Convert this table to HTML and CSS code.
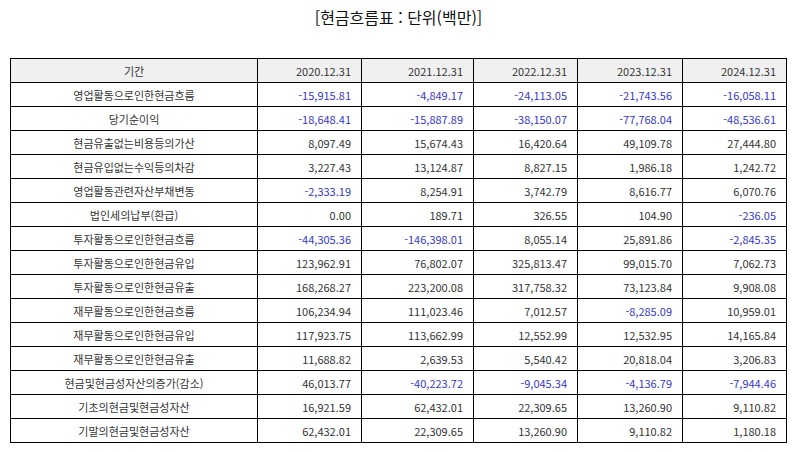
FILE: index.html
```html
<!DOCTYPE html>
<html lang="ko">
<head>
<meta charset="utf-8">
<title>현금흐름표</title>
<link rel="stylesheet" href="styles.css">
</head>
<body>
<div class="page">
  <h1 class="title">[현금흐름표 : 단위(백만)]</h1>
  <table class="cf">
    <colgroup>
      <col class="c-label">
      <col class="c-a">
      <col class="c-b">
      <col class="c-a">
      <col class="c-c">
      <col class="c-a">
    </colgroup>
    <thead>
      <tr><th class="lbl">기간</th><th>2020.12.31</th><th>2021.12.31</th><th>2022.12.31</th><th>2023.12.31</th><th>2024.12.31</th></tr>
    </thead>
    <tbody>
      <tr><td class="lbl">영업활동으로인한현금흐름</td><td class="neg">-15,915.81</td><td class="neg">-4,849.17</td><td class="neg">-24,113.05</td><td class="neg">-21,743.56</td><td class="neg">-16,058.11</td></tr>
      <tr><td class="lbl">당기순이익</td><td class="neg">-18,648.41</td><td class="neg">-15,887.89</td><td class="neg">-38,150.07</td><td class="neg">-77,768.04</td><td class="neg">-48,536.61</td></tr>
      <tr><td class="lbl">현금유출없는비용등의가산</td><td>8,097.49</td><td>15,674.43</td><td>16,420.64</td><td>49,109.78</td><td>27,444.80</td></tr>
      <tr><td class="lbl">현금유입없는수익등의차감</td><td>3,227.43</td><td>13,124.87</td><td>8,827.15</td><td>1,986.18</td><td>1,242.72</td></tr>
      <tr><td class="lbl">영업활동관련자산부채변동</td><td class="neg">-2,333.19</td><td>8,254.91</td><td>3,742.79</td><td>8,616.77</td><td>6,070.76</td></tr>
      <tr><td class="lbl">법인세의납부(환급)</td><td>0.00</td><td>189.71</td><td>326.55</td><td>104.90</td><td class="neg">-236.05</td></tr>
      <tr><td class="lbl">투자활동으로인한현금흐름</td><td class="neg">-44,305.36</td><td class="neg">-146,398.01</td><td>8,055.14</td><td>25,891.86</td><td class="neg">-2,845.35</td></tr>
      <tr><td class="lbl">투자활동으로인한현금유입</td><td>123,962.91</td><td>76,802.07</td><td>325,813.47</td><td>99,015.70</td><td>7,062.73</td></tr>
      <tr><td class="lbl">투자활동으로인한현금유출</td><td>168,268.27</td><td>223,200.08</td><td>317,758.32</td><td>73,123.84</td><td>9,908.08</td></tr>
      <tr><td class="lbl">재무활동으로인한현금흐름</td><td>106,234.94</td><td>111,023.46</td><td>7,012.57</td><td class="neg">-8,285.09</td><td>10,959.01</td></tr>
      <tr><td class="lbl">재무활동으로인한현금유입</td><td>117,923.75</td><td>113,662.99</td><td>12,552.99</td><td>12,532.95</td><td>14,165.84</td></tr>
      <tr><td class="lbl">재무활동으로인한현금유출</td><td>11,688.82</td><td>2,639.53</td><td>5,540.42</td><td>20,818.04</td><td>3,206.83</td></tr>
      <tr><td class="lbl">현금및현금성자산의증가(감소)</td><td>46,013.77</td><td class="neg">-40,223.72</td><td class="neg">-9,045.34</td><td class="neg">-4,136.79</td><td class="neg">-7,944.46</td></tr>
      <tr><td class="lbl">기초의현금및현금성자산</td><td>16,921.59</td><td>62,432.01</td><td>22,309.65</td><td>13,260.90</td><td>9,110.82</td></tr>
      <tr><td class="lbl">기말의현금및현금성자산</td><td>62,432.01</td><td>22,309.65</td><td>13,260.90</td><td>9,110.82</td><td>1,180.18</td></tr>
    </tbody>
  </table>
</div>
</body>
</html>
```

FILE: styles.css
```css
html, body {
  margin: 0;
  padding: 0;
  background: #ffffff;
}

body {
  font-family: "Noto Sans CJK KR", "Noto Sans", sans-serif;
  color: #333333;
}

.page {
  padding: 6px 0 0 10px;
}

.title {
  margin: 0;
  height: 52px;
  font-size: 16px;
  font-weight: 400;
  line-height: 22px;
  text-align: center;
  color: #111111;
  width: 777px;
}

.cf {
  border-collapse: collapse;
  table-layout: fixed;
  width: 777px;
  font-size: 11px;
}

.c-label { width: 247px; }
.c-a { width: 104px; }
.c-b { width: 112px; }
.c-c { width: 105px; }

.cf th,
.cf td {
  border: 1px solid #000000;
  height: 23px;
  padding: 0 10px 0 4px;
  text-align: right;
  font-weight: 400;
  line-height: 14px;
  white-space: nowrap;
  color: #333333;
}

.cf th {
  background: #f0f0f0;
}

.cf .lbl {
  text-align: center;
  padding: 0 4px;
}

.cf td.neg {
  color: #3636cf;
}
```
